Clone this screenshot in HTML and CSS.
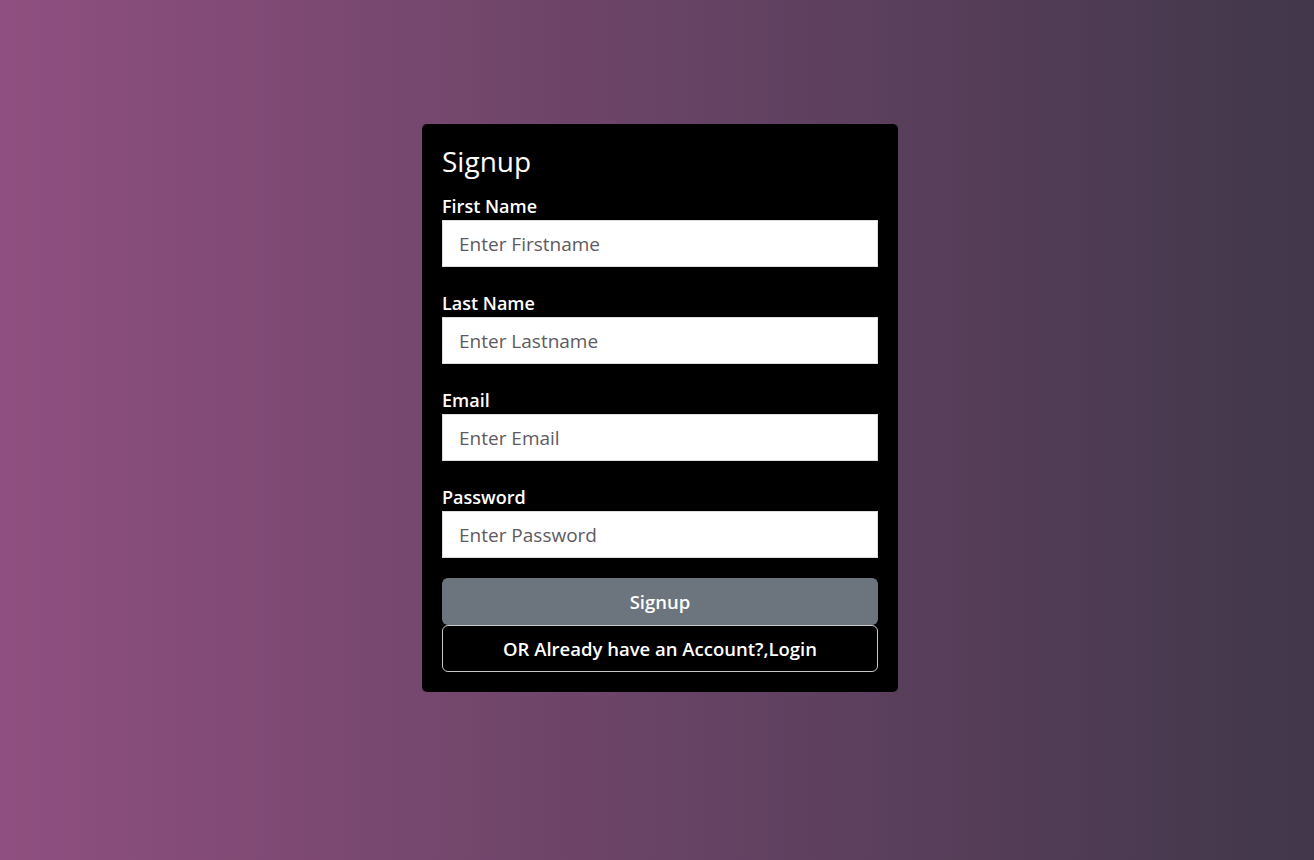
FILE: index.html
```html
<!DOCTYPE html>
<html>
<head>
<meta charset="utf-8">
<link rel="stylesheet" href="styles.css">
</head>
<body>
<main class="page">
  <form class="card">
    <h1 class="title">Signup</h1>
    <div class="group">
      <label class="label">First Name</label>
      <input class="input" type="text" placeholder="Enter Firstname">
    </div>
    <div class="group">
      <label class="label">Last Name</label>
      <input class="input" type="text" placeholder="Enter Lastname">
    </div>
    <div class="group">
      <label class="label">Email</label>
      <input class="input" type="email" placeholder="Enter Email">
    </div>
    <div class="group">
      <label class="label">Password</label>
      <input class="input" type="password" placeholder="Enter Password">
    </div>
    <button class="btn btn-primary" type="button">Signup</button>
    <button class="btn btn-outline" type="button">OR Already have an Account?,Login</button>
  </form>
</main>
</body>
</html>
```
FILE: styles.css
```css
* { box-sizing: border-box; }
html, body { margin: 0; height: 100%; }
body {
  font-family: "Open Sans", "DejaVu Sans", sans-serif;
  background: linear-gradient(to right, #8f4f80, #41374a);
}
.page {
  min-height: 860px;
  display: flex;
  justify-content: center;
  align-items: flex-start;
  padding-top: 124px;
  padding-left: 6px;
}
.card {
  width: 476px;
  background: #000;
  border-radius: 5px;
  padding: 20px;
  display: flex;
  flex-direction: column;
}
.title {
  margin: 0 0 15px;
  color: #fff;
  font-size: 28px;
  font-weight: 400;
  line-height: 34px;
}
.group { display: flex; flex-direction: column; margin-bottom: 23px; }
.group:last-of-type { margin-bottom: 20px; }
.label {
  color: #fff;
  font-size: 18px;
  font-weight: 600;
  line-height: 27px;
}
.input {
  height: 47px;
  border: 1px solid #dcdcdc;
  background: #fff;
  padding: 0 16px;
  font-family: inherit;
  font-size: 19px;
  color: #333;
  outline: none;
}
.input::placeholder { color: #5e5a62; }
.btn {
  height: 47px;
  width: 100%;
  border-radius: 6px;
  font-family: inherit;
  font-size: 18.5px;
  font-weight: 600;
  color: #fff;
  cursor: pointer;
}
.btn-primary { background: #6c757d; border: none; }
.btn-outline { background: #000; border: 1px solid #c8c8c8; }
```
